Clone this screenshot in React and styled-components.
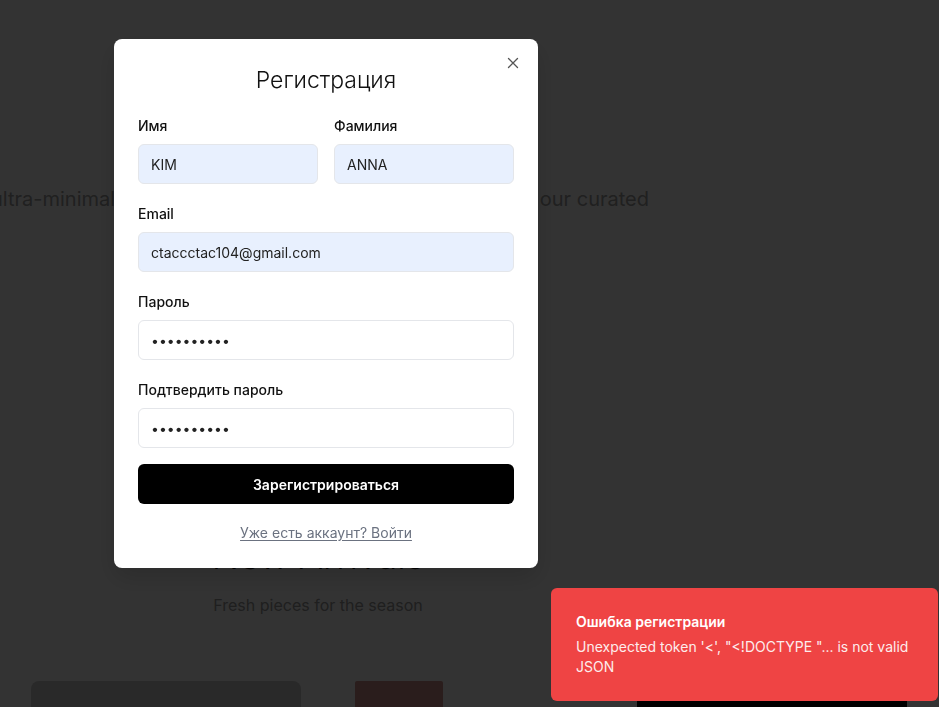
import React from "react";
import styled, { createGlobalStyle } from "styled-components";

const Global = createGlobalStyle`
  * { box-sizing: border-box; }
  html, body { margin: 0; padding: 0; background: #ffffff; }
  body { font-family: Inter, "Noto Sans", sans-serif; overflow: hidden; }
`;

const Page = styled.div`
  width: 939px;
  height: 707px;
  overflow: hidden;
  background: #ffffff;
`;

const Hero = styled.section`
  padding-top: 185px;
`;

const HeroLine = styled.p`
  margin: 0;
  width: 649px;
  display: flex;
  white-space: nowrap;
  font-size: 20px;
  line-height: 28px;
  font-weight: 400;
  color: #a0a0a0;
`;

const HeroStart = styled.span`
  margin-left: -9px;
`;

const HeroEnd = styled.span`
  margin-left: auto;
`;

const Arrivals = styled.section`
  width: 636px;
  margin-top: 323px;
  text-align: center;
`;

const ArrivalsTitle = styled.h2`
  margin: 0;
  font-size: 36px;
  line-height: 40px;
  font-weight: 300;
  color: #111;
`;

const ArrivalsSub = styled.p`
  margin: 19px 0 0;
  font-size: 16px;
  line-height: 20px;
  color: #9a9a9a;
`;

const Cards = styled.div`
  margin-top: 66px;
  padding: 0 31px;
  display: grid;
  grid-template-columns: repeat(3, 270px);
  gap: 33px;
`;

const Card = styled.div`
  height: 360px;
  border-radius: 8px;
  background: ${(p) => p.$bg};
  position: relative;
  overflow: hidden;
`;

const CardImage = styled.div`
  margin-left: 21px;
  width: 88px;
  height: 100%;
  background: #d0928a;
  border-radius: 2px;
`;

const Overlay = styled.div`
  position: fixed;
  inset: 0;
  background: rgba(0, 0, 0, 0.8);
`;

const Modal = styled.div`
  position: fixed;
  left: 114px;
  top: 39px;
  width: 424px;
  padding: 25px 24px 25px;
  background: #ffffff;
  border-radius: 8px;
  box-shadow: 0 10px 25px rgba(0, 0, 0, 0.15);
`;

const CloseButton = styled.button`
  position: absolute;
  top: 16px;
  right: 17px;
  width: 16px;
  height: 16px;
  padding: 0;
  border: 0;
  background: transparent;
  color: #555;
  display: flex;
  align-items: center;
  justify-content: center;
  cursor: pointer;
`;

const Title = styled.h2`
  margin: 0;
  text-align: center;
  font-size: 23px;
  line-height: 32px;
  font-weight: 300;
  color: #111;
`;

const Form = styled.form`
  margin-top: 20px;
  display: flex;
  flex-direction: column;
  gap: 20px;
`;

const Row = styled.div`
  display: grid;
  grid-template-columns: 1fr 1fr;
  gap: 16px;
`;

const Field = styled.div`
  display: flex;
  flex-direction: column;
  gap: 8px;
`;

const Label = styled.label`
  font-size: 14px;
  line-height: 20px;
  font-weight: 500;
  color: #111;
`;

const Input = styled.input`
  width: 100%;
  height: 40px;
  padding: 0 12px;
  border: 1px solid #e4e6ea;
  border-radius: 6px;
  background: ${(p) => (p.$filled ? "#e8f0fe" : "#ffffff")};
  font-family: Inter, sans-serif;
  font-size: 14px;
  color: #222;
  outline: none;
`;

const Submit = styled.button`
  margin-top: -4px;
  height: 40px;
  border: 0;
  border-radius: 6px;
  background: #000;
  color: #fff;
  font-family: Inter, sans-serif;
  font-size: 14px;
  font-weight: 600;
  cursor: pointer;
`;

const LoginLink = styled.a`
  display: block;
  margin-top: 19px;
  text-align: center;
  font-size: 14px;
  line-height: 20px;
  color: #6b7280;
  text-decoration: underline;
  text-underline-offset: 2px;
`;

const Toast = styled.div`
  position: fixed;
  left: 551px;
  top: 588px;
  width: 387px;
  padding: 24px 25px;
  background: #ef4444;
  border-radius: 6px;
  color: #fff;
`;

const ToastTitle = styled.div`
  font-size: 14px;
  line-height: 20px;
  font-weight: 600;
`;

const ToastText = styled.div`
  margin-top: 5px;
  font-size: 14px;
  line-height: 20px;
  opacity: 0.9;
`;

function CloseIcon() {
  return (
    <svg width="12" height="12" viewBox="0 0 12 12" fill="none">
      <path d="M1.5 1.5L10.5 10.5M10.5 1.5L1.5 10.5" stroke="currentColor" strokeWidth="1.3" strokeLinecap="round" />
    </svg>
  );
}

export default function App() {
  return (
    <>
      <Global />
      <Page>
        <Hero>
          <HeroLine>
            <HeroStart>ultra-minimal wardrobe staples,</HeroStart>
            <HeroEnd>Explore our curated</HeroEnd>
          </HeroLine>
        </Hero>
        <Arrivals>
          <ArrivalsTitle>New Arrivals</ArrivalsTitle>
          <ArrivalsSub>Fresh pieces for the season</ArrivalsSub>
        </Arrivals>
        <Cards>
          <Card $bg="#cccccc" />
          <Card $bg="#ffffff">
            <CardImage />
          </Card>
          <Card $bg="#000000" />
        </Cards>
      </Page>
      <Overlay />
      <Modal>
        <CloseButton aria-label="Закрыть">
          <CloseIcon />
        </CloseButton>
        <Title>Регистрация</Title>
        <Form onSubmit={(e) => e.preventDefault()}>
          <Row>
            <Field>
              <Label>Имя</Label>
              <Input $filled defaultValue="KIM" />
            </Field>
            <Field>
              <Label>Фамилия</Label>
              <Input $filled defaultValue="ANNA" />
            </Field>
          </Row>
          <Field>
            <Label>Email</Label>
            <Input $filled defaultValue="ctaccctac104@gmail.com" />
          </Field>
          <Field>
            <Label>Пароль</Label>
            <Input type="password" defaultValue="1234567890" />
          </Field>
          <Field>
            <Label>Подтвердить пароль</Label>
            <Input type="password" defaultValue="1234567890" />
          </Field>
          <Submit type="submit">Зарегистрироваться</Submit>
        </Form>
        <LoginLink href="#">Уже есть аккаунт? Войти</LoginLink>
      </Modal>
      <Toast>
        <ToastTitle>Ошибка регистрации</ToastTitle>
        <ToastText>Unexpected token '&lt;', "&lt;!DOCTYPE "... is not valid JSON</ToastText>
      </Toast>
    </>
  );
}
